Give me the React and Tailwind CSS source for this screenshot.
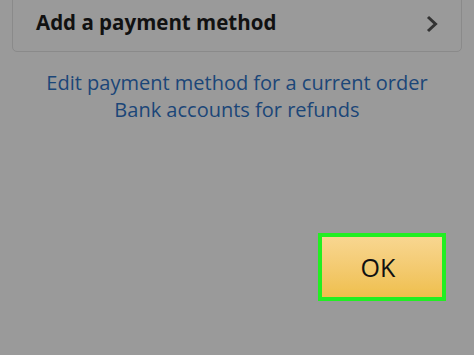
export default function App() {
  return (
    <div className="w-[474px] h-[355px] overflow-hidden bg-[#9a9a9a] font-['Open_Sans',sans-serif] flex flex-col">
      <div className="mx-[12px] mt-[-10px] h-[62px] rounded-[5px] border border-[#8a8a8a] flex items-end pb-[19px] pl-[23px] pr-[22px]">
        <span className="flex-1 text-[20.5px] font-bold text-[#111] leading-none">Add a payment method</span>
        <svg width="14" height="18" viewBox="0 0 14 18" className="mb-[-1px]">
          <path d="M3 2 L10.5 9 L3 16" fill="none" stroke="#333" strokeWidth="3" />
        </svg>
      </div>
      <div className="mt-[17px] text-center text-[20px] leading-[27px] text-[#1b4678]">
        <p>Edit payment method for a current order</p>
        <p>Bank accounts for refunds</p>
      </div>
      <div className="flex justify-end pr-[28px] mt-[110px]">
        <button className="w-[128px] h-[68px] border-[4px] border-[#22ee22] bg-gradient-to-b from-[#f8d690] to-[#efbf4c] text-[25px] text-[#111] leading-none pr-[8px]">
          OK
        </button>
      </div>
    </div>
  );
}
